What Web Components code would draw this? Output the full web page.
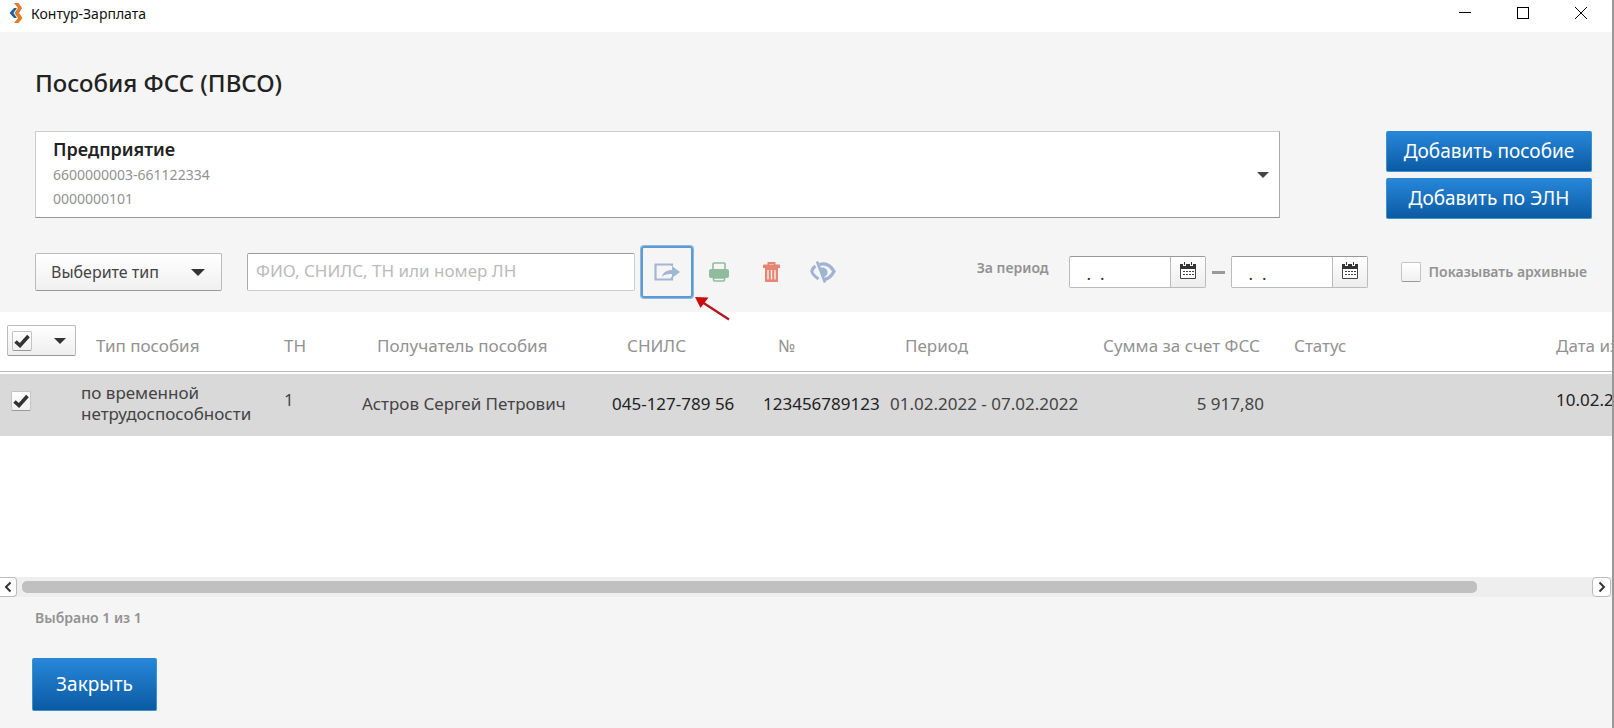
<!DOCTYPE html>
<html lang="ru">
<head>
<meta charset="utf-8">
<title>Контур-Зарплата</title>
<style>
  body { margin: 0; font-family: "Noto Sans", "Open Sans", sans-serif; color: #444; background: #f5f5f5; }
</style>
</head>
<body>
<app-window></app-window>

<script>
function define(name, html, setup) {
  const template = document.createElement('template');
  template.innerHTML = '<style>*{box-sizing:border-box}button,input,select{font-family:inherit;margin:0}svg{display:block}</style>' + html;
  customElements.define(name, class extends HTMLElement {
    constructor() {
      super();
      this.attachShadow({ mode: 'open' }).append(template.content.cloneNode(true));
    }
    connectedCallback() { if (setup) setup(this, this.shadowRoot); }
  });
}

define('title-bar', `
  <style>
    :host { display: flex; align-items: center; height: 32px; padding: 0 2px 0 8px; box-sizing: border-box; background: #fff; color: #111; }
    .name { flex: 1; margin-left: 7px; font-size: 14px; line-height: 20px; padding-bottom: 4px; }
    .logo { margin-bottom: 6px; }
    button { width: 58px; height: 26px; margin-bottom: 6px; padding: 0; border: 0; background: none; display: grid; place-items: center; }
  </style>
  <svg class="logo" width="16" height="20" viewBox="0 0 16 20">
    <path d="M6 0h4.500l3.500 5-3 5 3.500 5-4 5H6l4-5-3.500-5L10 5z" fill="#e07b28"/>
    <path d="M6 5H9L5.500 10 9 15H6L1.500 10z" fill="#1c62a5"/>
  </svg>
  <span class="name">Контур-Зарплата</span>
  <button aria-label="Свернуть"><svg width="12" height="12"><path d="M0 5.500h12" stroke="#000"/></svg></button>
  <button aria-label="Развернуть"><svg width="12" height="12"><rect x=".5" y=".5" width="11" height="11" fill="none" stroke="#000"/></svg></button>
  <button aria-label="Закрыть окно"><svg width="12" height="12"><path d="M0 0l12 12M12 0L0 12" stroke="#000" fill="none"/></svg></button>
`);

define('primary-button', `
  <style>
    :host { display: block; }
    button { width: 100%; height: 100%; padding: 0 0 2px; border: 1px solid #3a94cc; border-top-color: #2a86cc; border-radius: 2px;
      background: linear-gradient(#2787d9, #0b5aa3); color: #fff; font-size: 19px; line-height: 26px; }
  </style>
  <button><slot></slot></button>
`);

define('company-picker', `
  <style>
    :host { display: block; }
    button { display: flex; width: 100%; height: 87px; padding: 3px 10px 0 17px; border: 1px solid #ccc; border-bottom: 1px solid #999;
      border-right-color: #aaa; background: #fff; text-align: left; color: #222; }
    .lines { flex: 1; display: flex; flex-direction: column; font-size: 14px; line-height: 24px; color: #929292; }
    ::slotted(strong) { font-size: 18px; line-height: 28px; font-weight: 600; color: #222; }
    svg { align-self: center; margin-bottom: 2px; }
  </style>
  <button aria-haspopup="listbox"><span class="lines"><slot></slot></span>
    <svg width="12" height="7"><path d="M0 0h12L6 6z" fill="#444"/></svg></button>
`);

define('type-select', `
  <style>
    :host { display: flex; align-items: center; width: 187px; height: 38px; box-sizing: border-box; border: 1px solid #bbb; border-bottom-color: #999; border-radius: 2px;
      background: linear-gradient(#fff, #f0f0f0); }
    select { appearance: none; width: 100%; height: 100%; padding: 0 0 0 15px; border: 0; background: none; color: #444; font-size: 16px; grid-area: 1/1; }
    label { display: grid; align-items: center; flex: 1; height: 100%; }
    svg { grid-area: 1/1; justify-self: end; margin-right: 16px; pointer-events: none; }
  </style>
  <label><select aria-label="Тип пособия"><option>Выберите тип</option></select>
  <svg width="14" height="7"><path d="M0 0h14L7 7z" fill="#333"/></svg></label>
`);

define('search-box', `
  <style>
    :host { display: block; width: 388px; }
    input { display: block; width: 100%; height: 38px; padding: 0 8px 4px; border: 1px solid #ccc; border-top-color: #999; border-left-color: #aaa;
      border-radius: 2px; background: #fff; font-size: 17px; }
    input::placeholder { color: #bbb; opacity: 1; }
  </style>
  <input type="text" aria-label="Поиск" placeholder="ФИО, СНИЛС, ТН или номер ЛН">
`);

define('tool-button', `
  <style>
    :host { display: block; width: 52px; height: 52px; }
    button { display: grid; place-items: center; width: 100%; height: 100%; padding: 0; border: 0; border-radius: 3px; background: none; }
    :host([active]) button { border: 2px solid #5b9bd5; box-shadow: 0 0 0 1px #8db9e2; }
  </style>
  <button><slot></slot></button>
`, (host, root) => root.querySelector('button').setAttribute('aria-label', host.getAttribute('name')));

define('date-field', `
  <style>
    :host { display: flex; width: 137px; height: 32px; box-sizing: border-box; border: 1px solid #bbb; border-top-color: #999; border-radius: 2px; background: #fff; }
    input { flex: 1; min-width: 0; padding: 2px 0 0 17px; border: 0; background: none; color: #333; font-size: 17px; outline: 0; }
    button { width: 35px; padding: 0 0 4px; border: 0; border-left: 1px solid #bbb; background: linear-gradient(#fff, #ededed); display: grid; place-items: center; }
  </style>
  <input type="text" value=".  .">
  <button aria-label="Открыть календарь"><svg width="16" height="17" viewBox="0 0 16 17">
    <path d="M.5 3h15v13.500H.5z" fill="#fff" stroke="#444"/>
    <path d="M0 2h16v5H0z" fill="#333"/>
    <path d="M3 0h3v4H3zM10 0h3v4h-3z" fill="#f8f8f8"/><path d="M4 0h1v3H4zM11 0h1v3h-1z" fill="#333"/>
    <path d="M3 9.500h11M3 12.500h11" stroke="#444" stroke-dasharray="2 1"/>
  </svg></button>
`, (host, root) => root.querySelector('input').setAttribute('aria-label', host.getAttribute('name')));

define('check-box', `
  <style>
    :host { display: block; }
    label { display: flex; align-items: center; gap: 8px; font-size: 14px; line-height: 20px; font-weight: 600; color: #929292; }
    .box { display: grid; width: 20px; height: 20px; }
    input { appearance: none; grid-area: 1/1; width: 20px; height: 20px; border: 1px solid #c4c4c4; border-bottom-color: #999; border-radius: 2px; background: linear-gradient(#fff, #f0f0f0); }
    svg { grid-area: 1/1; place-self: center; visibility: hidden; pointer-events: none; z-index: 1; }
    input:checked + svg { visibility: visible; }
  </style>
  <label><span class="box"><input type="checkbox"><svg width="16" height="14" viewBox="0 0 16 14"><path d="M1.500 7.500L6 11.500 14.500 2" fill="none" stroke="#333" stroke-width="3.600"/></svg></span><slot></slot></label>
`, (host, root) => {
  const input = root.querySelector('input');
  input.checked = host.hasAttribute('checked');
  if (host.hasAttribute('name')) input.setAttribute('aria-label', host.getAttribute('name'));
});

define('select-all', `
  <style>
    :host { display: flex; align-items: center; width: 69px; height: 31px; box-sizing: border-box; padding-left: 4px; border: 1px solid #bbb; border-bottom-color: #999; border-radius: 2px;
      background: linear-gradient(#fff, #eee); }
    button { flex: 1; height: 100%; padding: 0 0 0 12px; border: 0; background: none; display: grid; place-items: center; }
  </style>
  <check-box checked name="Выбрать все"></check-box>
  <button aria-label="Варианты выбора"><svg width="12" height="6"><path d="M0 0h12L6 6z" fill="#333"/></svg></button>
`);

define('benefit-table', `
  <style>
    :host { display: block; overflow: hidden; background: #fff; }
    table { width: 100%; table-layout: fixed; border-collapse: separate; border-spacing: 0; font-size: 17px; line-height: 21px; }
    th, td { padding: 0; text-align: left; white-space: nowrap; font-weight: 400; }
    th { height: 60px; padding: 8px 0 0 15px; border-bottom: 1px solid #bbb; color: #929292; }
    th.all { padding: 0 0 2px 7px; }
    td { height: 64px; border-top: 2px solid #fff; background: #d9d9d9; background-clip: padding-box; color: #444; padding-bottom: 4px; }
    td.pick { padding: 0 0 8px 11px; }
    td.inset { padding: 0 0 12px 15px; }
    td.sum { text-align: right; padding-right: 15px; }
    td.dark { color: #222; }
  </style>
  <table>
    <colgroup>
      <col style="width:81px"><col style="width:188px"><col style="width:93px"><col style="width:250px"><col style="width:151px">
      <col style="width:127px"><col style="width:198px"><col style="width:191px"><col style="width:262px"><col>
    </colgroup>
    <thead><tr>
      <th class="all"><select-all></select-all></th><th>Тип пособия</th><th>ТН</th><th>Получатель пособия</th><th>СНИЛС</th>
      <th>№</th><th>Период</th><th>Сумма за счет ФСС</th><th>Статус</th><th>Дата изменения</th>
    </tr></thead>
    <tbody><tr>
      <td class="pick"><check-box checked name="Выбрать строку"></check-box></td><td>по временной<br>нетрудоспособности</td><td class="inset">1</td>
      <td>Астров Сергей Петрович</td><td class="dark">045-127-789 56</td><td class="dark">123456789123</td>
      <td>01.02.2022 - 07.02.2022</td><td class="sum">5 917,80</td><td></td><td class="inset dark">10.02.2022</td>
    </tr></tbody>
  </table>
`);

define('scroll-strip', `
  <style>
    :host { display: flex; align-items: center; height: 20px; gap: 5px; padding-right: 1px; background: #eee; }
    button { width: 19px; height: 20px; padding: 0; border: 1px solid #bbb; border-radius: 4px; background: #fff; display: grid; place-items: center; }
    button:first-of-type { width: 17px; border-left: 0; border-radius: 0 4px 4px 0; }
    .track { flex: 1; }
    .thumb { width: 93%; height: 12px; border-radius: 5px; background: #c0c0c0; }
  </style>
  <button aria-label="Прокрутить влево"><svg width="8" height="12"><path d="M6.500 1.500L2 6l4.500 4.500" fill="none" stroke="#333" stroke-width="2"/></svg></button>
  <div class="track"><div class="thumb"></div></div>
  <button aria-label="Прокрутить вправо"><svg width="8" height="12"><path d="M1.500 1.500L6 6l-4.500 4.500" fill="none" stroke="#333" stroke-width="2"/></svg></button>
`);

define('filter-bar', `
  <style>
    :host { display: flex; align-items: center; padding: 27px 25px 14px 35px; }
    .tools { display: flex; margin-left: 6px; position: relative; }
    search-box { margin-left: 25px; }
    .pointer { position: absolute; left: 53px; top: 49px; z-index: 2; }
    .label { padding-bottom: 8px; font-size: 14px; line-height: 20px; font-weight: 600; color: #929292; }
    .period { display: flex; align-items: center; margin-left: auto; }
    .dash { width: 13px; height: 3px; margin: 0 6px; background: #999; }
    .label + date-field { margin-left: 20px; }
    check-box { margin-left: 33px; }
  </style>
  <type-select></type-select>
  <search-box></search-box>
  <div class="tools">
    <tool-button active name="Отправить"><svg width="27" height="18" viewBox="0 0 27 18">
      <path d="M18 3V1.500H1.500v15H18V14" fill="none" stroke="#a3b6d6" stroke-width="2.200"/><path d="M8 14c1-5 5-7 10-7V3l8 6-8 6v-4c-4 0-7 0-10 3z" fill="#a3b6d6"/></svg></tool-button>
    <tool-button name="Печать"><svg width="20" height="20" viewBox="0 0 20 20">
      <rect x="4" y="1" width="12" height="8" rx="1" fill="none" stroke="#90bc9e" stroke-width="1.600"/><rect y="7" width="20" height="9" rx="2" fill="#90bc9e"/><path d="M4.500 16v2a1 1 0 0 0 1 1h9a1 1 0 0 0 1-1v-2z" fill="#f5f5f5" stroke="#90bc9e" stroke-width="1.600"/></svg></tool-button>
    <tool-button name="Удалить"><svg width="17" height="20" viewBox="0 0 17 20">
      <path d="M5.500 3V1h6v2" fill="none" stroke="#e58572" stroke-width="2"/><path d="M1 2.500h15a1 1 0 0 1 1 1V6H0V3.500a1 1 0 0 1 1-1zM2 6h13v13a1 1 0 0 1-1 1H3a1 1 0 0 1-1-1z" fill="#e58572"/><path d="M5 8v9.500M8.500 8v9.500M12 8v9.500" stroke="#f8eeec" stroke-width="1.400"/></svg></tool-button>
    <tool-button name="Скрыть"><svg width="26" height="22" viewBox="0 0 26 22">
      <path d="M7 .5L15 21.500" stroke="#9fb3d4" stroke-width="2.600"/>
      <path d="M9.500 3.500C16 1.500 21 5 24 10.500 21.500 15 18 18 14.500 18.200" fill="none" stroke="#9fb3d4" stroke-width="3.400"/>
      <path d="M10.500 6.500c4-.5 7 1.500 7 4.500s-2 4.500-4 5z" fill="#9fb3d4"/>
      <path d="M5.500 5C3.500 6.500 2 8.500 1.800 10.500 2.500 13.500 5 15.500 8.500 18" fill="none" stroke="#9fb3d4" stroke-width="3"/></svg></tool-button>
    <svg class="pointer" width="38" height="28" viewBox="0 0 38 28"><path d="M8 7L35 24.500" stroke="#b01820" stroke-width="2.400"/><path d="M1 2l13.500.5L6.500 13z" fill="#cc0c0c"/></svg>
  </div>
  <div class="period">
    <span class="label">За период</span>
    <date-field name="Начало периода"></date-field>
    <span class="dash"></span>
    <date-field name="Конец периода"></date-field>
  </div>
  <check-box>Показывать архивные</check-box>
`);

define('app-window', `
  <style>
    :host { display: flex; flex-direction: column; min-height: 100vh; box-sizing: border-box; border-right: 2px solid #999; }
    h1 { margin: 0; padding: 35px 35px 0; font-size: 24px; line-height: 32px; font-weight: 500; color: #222; }
    .top { display: flex; justify-content: space-between; padding: 32px 20px 0 35px; gap: 106px; }
    company-picker { flex: 1; }
    .actions { display: grid; gap: 6px; width: 206px; grid-auto-rows: 41px; }
    benefit-table { flex: 1; }
    .count { padding: 11px 35px 0; font-size: 14px; line-height: 20px; font-weight: 600; color: #929292; }
    .close { width: 125px; height: 53px; margin: 30px 32px 17px; }
  </style>
  <title-bar></title-bar>
  <h1>Пособия ФСС (ПВСО)</h1>
  <div class="top">
    <company-picker><strong>Предприятие</strong><span>6600000003-661122334</span><span>0000000101</span></company-picker>
    <div class="actions"><primary-button>Добавить пособие</primary-button><primary-button>Добавить по ЭЛН</primary-button></div>
  </div>
  <filter-bar></filter-bar>
  <benefit-table></benefit-table>
  <scroll-strip></scroll-strip>
  <div class="count">Выбрано 1 из 1</div>
  <primary-button class="close">Закрыть</primary-button>
`);
</script>
</body>
</html>
